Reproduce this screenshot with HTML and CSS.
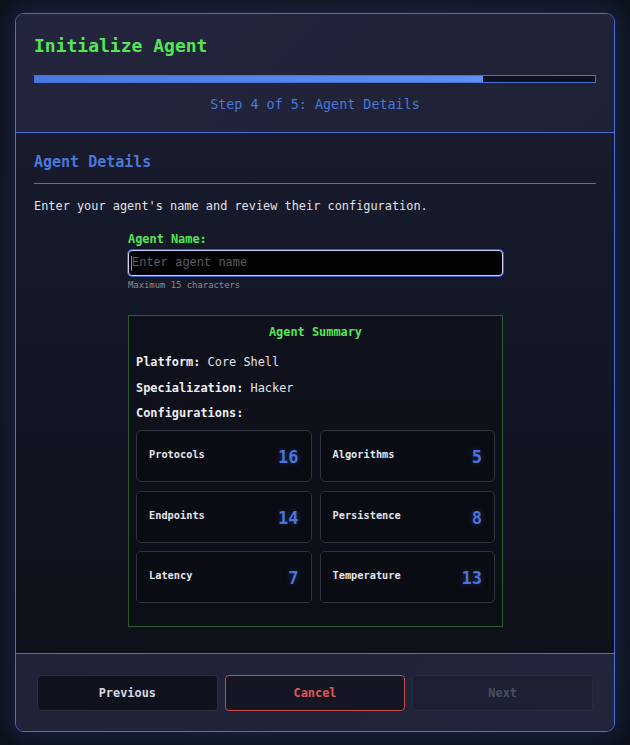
FILE: index.html
```html
<!DOCTYPE html>
<html lang="en">
<head>
<meta charset="utf-8">
<title>Initialize Agent</title>
<link rel="stylesheet" href="styles.css">
</head>
<body>
<div class="page">
  <div class="modal">
    <header class="modal-header">
      <h1 class="title">Initialize Agent</h1>
      <div class="progress"><div class="progress-fill" style="width: 80%"></div></div>
      <div class="step">Step 4 of 5: Agent Details</div>
    </header>
    <main class="modal-body">
      <h2 class="section-title">Agent Details</h2>
      <p class="desc">Enter your agent's name and review their configuration.</p>
      <div class="form">
        <label class="field-label" for="agent-name">Agent Name:</label>
        <div class="input-wrap">
          <input id="agent-name" class="field-input" type="text" placeholder="Enter agent name" maxlength="15">
          <span class="caret"></span>
        </div>
        <div class="hint">Maximum 15 characters</div>
        <section class="summary">
          <div class="summary-title">Agent Summary</div>
          <p class="summary-line"><b>Platform:</b> Core Shell</p>
          <p class="summary-line"><b>Specialization:</b> Hacker</p>
          <p class="summary-line"><b>Configurations:</b></p>
          <div class="config-grid">
            <div class="config"><span class="config-name">Protocols</span><span class="config-val">16</span></div>
            <div class="config"><span class="config-name">Algorithms</span><span class="config-val">5</span></div>
            <div class="config"><span class="config-name">Endpoints</span><span class="config-val">14</span></div>
            <div class="config"><span class="config-name">Persistence</span><span class="config-val">8</span></div>
            <div class="config"><span class="config-name">Latency</span><span class="config-val">7</span></div>
            <div class="config"><span class="config-name">Temperature</span><span class="config-val">13</span></div>
          </div>
        </section>
      </div>
    </main>
    <footer class="modal-footer">
      <button class="btn btn-prev">Previous</button>
      <button class="btn btn-cancel">Cancel</button>
      <button class="btn btn-next" disabled>Next</button>
    </footer>
  </div>
</div>
</body>
</html>
```

FILE: styles.css
```css
* { box-sizing: border-box; }
html, body {
  margin: 0;
  padding: 0;
  background: #0f1420;
  font-family: "DejaVu Sans Mono", "Liberation Mono", monospace;
}
.page {
  width: 630px;
  height: 745px;
  padding-top: 13px;
  background: radial-gradient(ellipse at 50% 40%, #151b2b 0%, #10151f 60%, #0d121c 100%);
}
.modal {
  width: 600px;
  margin: 0 auto;
  border: 1px solid #4a6fd6;
  border-radius: 9px;
  overflow: hidden;
  box-shadow: 0 0 22px rgba(60, 100, 220, 0.28);
}
.modal-header {
  background: linear-gradient(135deg, #22253c 0%, #1f2236 100%);
  padding: 20px 18px 18px;
  border-bottom: 1px solid #4a6fd6;
}
.title {
  margin: 0;
  font-size: 18px;
  line-height: 24px;
  font-weight: bold;
  color: #55e655;
}
.progress {
  margin-top: 17px;
  height: 8px;
  border: 1px solid #4a70d8;
  background: #0e1122;
}
.progress-fill {
  height: 100%;
  background: linear-gradient(90deg, #4a78e2 0%, #5e8ff4 100%);
}
.step {
  margin-top: 13px;
  text-align: center;
  font-size: 13.4px;
  line-height: 18px;
  color: #4a78dc;
}
.modal-body {
  background: linear-gradient(180deg, #181b2c 0%, #131623 50%, #0f111a 100%);
  padding: 19px 18px 26px;
}
.section-title {
  margin: 0;
  font-size: 15px;
  line-height: 20px;
  font-weight: bold;
  color: #4a78dc;
  padding-bottom: 11px;
  border-bottom: 1px solid #4a6fd6;
}
.desc {
  margin: 14px 0 0;
  font-size: 11.9px;
  line-height: 16px;
  color: #e0e1ea;
}
.form {
  width: 376px;
  margin: 17px auto 0;
  padding-left: 1px;
}
.field-label {
  display: block;
  font-size: 11.9px;
  line-height: 16px;
  font-weight: bold;
  color: #55e655;
}
.input-wrap {
  position: relative;
  margin-top: 3px;
}
.field-input {
  display: block;
  width: 100%;
  height: 26px;
  margin: 0;
  padding: 0 0 0 3px;
  background: #030305;
  border: 1px solid #c9d3ff;
  border-radius: 4px;
  box-shadow: 0 0 0 1px #3658c4;
  outline: none;
  color: #55e655;
  caret-color: #55e655;
  font-family: "Liberation Mono", monospace;
  font-size: 12px;
}
.field-input::placeholder { color: #5c5c5e; }
.caret {
  position: absolute;
  left: 3px;
  top: 6px;
  width: 1px;
  height: 15px;
  background: #3fc43f;
}
.hint {
  margin-top: 3px;
  font-size: 8.9px;
  line-height: 12px;
  color: #8a8c96;
}
.summary {
  margin-top: 24px;
  border: 1px solid #2b5a2f;
  background: linear-gradient(180deg, #0f121c 0%, #0c0f18 100%);
  padding: 8px 7px 23px;
}
.summary-title {
  text-align: center;
  font-size: 11.9px;
  line-height: 16px;
  font-weight: bold;
  color: #55e655;
  margin-bottom: 14px;
}
.summary-line {
  margin: 10px 0 0;
  font-size: 11.9px;
  line-height: 16px;
  color: #e4e4ea;
}
.summary-line + .summary-line + .summary-line { margin-top: 9px; }
.summary-line b { color: #eeeef2; }
.config-grid {
  margin-top: 9px;
  display: grid;
  grid-template-columns: 1fr 1fr;
  column-gap: 8px;
  row-gap: 8.5px;
}
.config {
  height: 52px;
  border: 1px solid #2f3340;
  border-radius: 5px;
  background: #0a0c13;
  padding: 0 12px;
  display: flex;
  justify-content: space-between;
  align-items: center;
}
.config-name {
  font-size: 10.3px;
  line-height: 14px;
  padding-bottom: 4px;
  font-weight: bold;
  color: #e2e4ec;
}
.config-val {
  font-size: 17px;
  line-height: 20px;
  padding-top: 2px;
  font-weight: bold;
  color: #4a74dc;
  text-shadow: 0 0 6px rgba(74, 116, 220, 0.35);
}
.modal-footer {
  background: linear-gradient(135deg, #202237 0%, #22253b 100%);
  border-top: 1px solid #4a6fd6;
  padding: 21px 21px 20px;
  display: grid;
  grid-template-columns: 1fr 1fr 1fr;
  gap: 7px;
}
.btn {
  height: 36px;
  border-radius: 4px;
  font-family: "DejaVu Sans Mono", monospace;
  font-size: 11.9px;
  font-weight: bold;
  cursor: pointer;
}
.btn-prev {
  background: #10121d;
  border: 1px solid #2c3042;
  color: #d6d8e0;
}
.btn-cancel {
  background: #141624;
  border: 1px solid #c84a4a;
  color: #e05656;
}
.btn-next {
  background: #1d1f32;
  border: 1px solid #292c3f;
  color: #4a4d62;
  cursor: default;
}
```
